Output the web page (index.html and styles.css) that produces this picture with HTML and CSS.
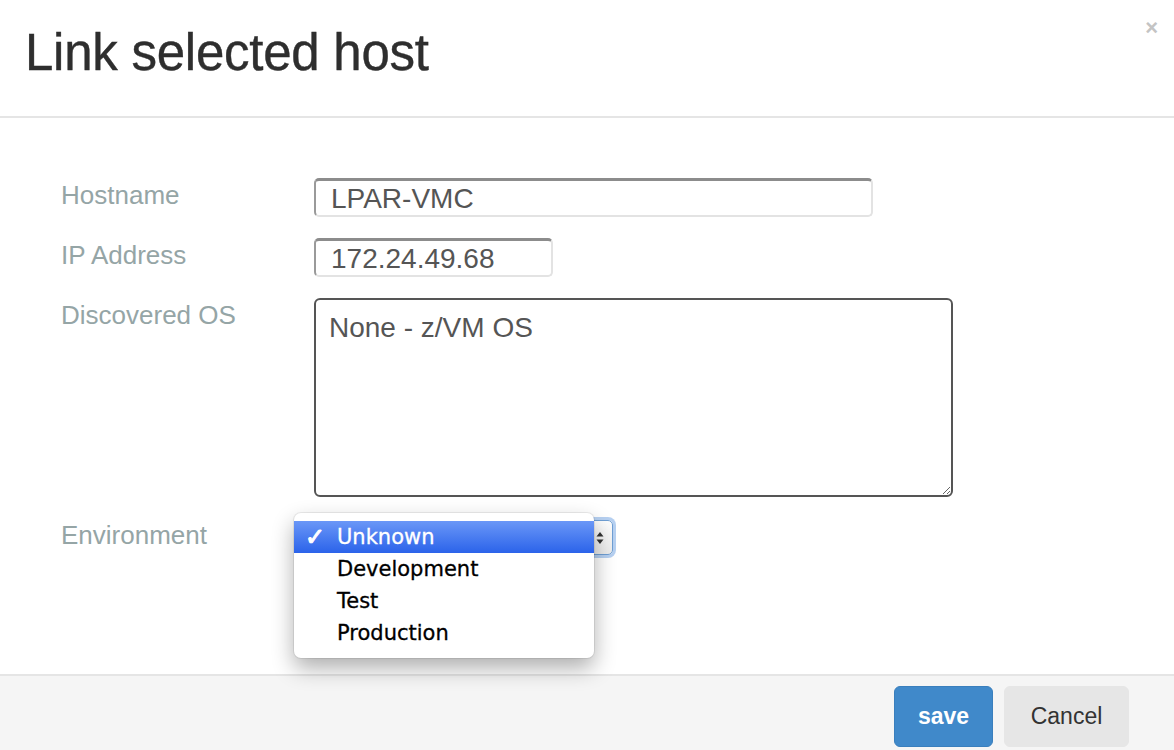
FILE: index.html
```html
<!DOCTYPE html>
<html>
<head>
<meta charset="utf-8">
<link rel="stylesheet" href="styles.css">
</head>
<body>
<div class="modal">
  <header class="modal-header">
    <h1 class="title">Link selected host</h1>
    <span class="close">×</span>
  </header>
  <main class="modal-body">
    <div class="row">
      <label class="label">Hostname</label>
      <div class="input input-wide">LPAR-VMC</div>
    </div>
    <div class="row">
      <label class="label">IP Address</label>
      <div class="input input-short">172.24.49.68</div>
    </div>
    <div class="row">
      <label class="label">Discovered OS</label>
      <textarea class="textarea">None - z/VM OS</textarea>
    </div>
    <div class="row">
      <label class="label">Environment</label>
      <div class="select-wrap">
        <div class="select">
          <svg class="arrows" width="8" height="14" viewBox="0 0 8 14"><path d="M4 1 L7.5 5.5 H0.5 Z M4 13 L7.5 8.5 H0.5 Z" fill="#333"/></svg>
        </div>
        <ul class="menu">
          <li class="opt opt-active"><span class="check">✓</span>Unknown</li>
          <li class="opt"><span class="check"></span>Development</li>
          <li class="opt"><span class="check"></span>Test</li>
          <li class="opt"><span class="check"></span>Production</li>
        </ul>
      </div>
    </div>
  </main>
  <footer class="modal-footer">
    <button class="btn btn-primary">save</button>
    <button class="btn btn-default">Cancel</button>
  </footer>
</div>
</body>
</html>
```
FILE: styles.css
```css
html, body {
  margin: 0;
  padding: 0;
  background: #fff;
}
body {
  width: 1174px;
  height: 750px;
  overflow: hidden;
  font-family: "Liberation Sans", Arial, sans-serif;
}
.modal {
  display: flex;
  flex-direction: column;
  height: 750px;
}
.modal-header {
  display: flex;
  justify-content: space-between;
  align-items: flex-start;
  padding: 25px 16px 36px 25px;
  border-bottom: 2px solid #e5e5e5;
}
.title {
  margin: 0;
  font-size: 51px;
  line-height: 55px;
  font-weight: normal;
  color: #2e2e2e;
  letter-spacing: -0.25px;
  -webkit-text-stroke: 0.4px #2e2e2e;
}
.close {
  font-size: 22px;
  line-height: 22px;
  color: #c4c4c4;
  font-weight: bold;
  margin-top: -8px;
}
.modal-body {
  flex: 1;
  padding: 60px 0 0 61px;
  display: flex;
  flex-direction: column;
  gap: 21px;
}
.row {
  display: flex;
  align-items: flex-start;
}
.label {
  width: 253px;
  font-size: 26px;
  line-height: 32px;
  padding-top: 1px;
  color: #95a5a6;
}
.input {
  box-sizing: border-box;
  height: 39px;
  padding: 0 15px;
  font-size: 28px;
  line-height: 35px;
  color: #555;
  border: 2px solid #e3e3e3;
  border-top: 3px solid #8c8c8c;
  border-left-color: #9a9a9a;
  border-radius: 5px;
}
.input-wide { width: 559px; }
.input-short { width: 239px; }
.textarea {
  box-sizing: border-box;
  width: 639px;
  height: 199px;
  margin: 0;
  padding: 12px 13px;
  font-family: "Liberation Sans", Arial, sans-serif;
  font-size: 28px;
  color: #555;
  border: 2px solid #555;
  border-radius: 6px;
  background: #fff;
  outline: none;
}
.select-wrap {
  position: relative;
  margin-top: 2px;
}
.select {
  box-sizing: border-box;
  width: 299px;
  height: 35px;
  border: 1px solid #6f9fd4;
  border-radius: 5px;
  background: linear-gradient(#fdfdfd, #ececec);
  box-shadow: 0 0 0 3px rgba(122, 170, 230, 0.55);
  display: flex;
  justify-content: flex-end;
  align-items: center;
  padding-right: 8px;
}
.menu {
  position: absolute;
  left: -20px;
  top: -7px;
  width: 300px;
  margin: 0;
  padding: 8px 0 9px;
  list-style: none;
  background: #fff;
  border-radius: 7px;
  box-shadow: 0 10px 22px rgba(0, 0, 0, 0.32), 0 0 0 1px rgba(0, 0, 0, 0.07);
  font-family: "DejaVu Sans", Verdana, sans-serif;
  font-size: 21px;
}
.opt {
  height: 32px;
  line-height: 32px;
  color: #000;
  padding-left: 11px;
  display: flex;
  -webkit-text-stroke: 0.3px currentColor;
}
.opt-active {
  color: #fff;
  background: linear-gradient(#6a97f7, #2b63ea);
}
.check {
  width: 32px;
  font-weight: bold;
  font-size: 24px;
  -webkit-text-stroke: 1px currentColor;
}
.modal-footer {
  box-sizing: border-box;
  height: 76px;
  border-top: 2px solid #e5e5e5;
  background: #f5f5f5;
  display: flex;
  justify-content: flex-end;
  align-items: flex-start;
  gap: 11px;
  padding: 10px 45px 0 0;
}
.btn {
  height: 61px;
  flex-shrink: 0;
  border-radius: 6px;
  font-family: "Liberation Sans", Arial, sans-serif;
  font-size: 23px;
  padding: 0;
  cursor: pointer;
}
.btn-primary {
  width: 99px;
  background: #4089ca;
  border: 1px solid #3a7fbd;
  color: #fff;
  font-weight: bold;
}
.btn-default {
  width: 125px;
  background: #e6e6e6;
  border: 1px solid #e6e6e6;
  color: #333;
}
```
